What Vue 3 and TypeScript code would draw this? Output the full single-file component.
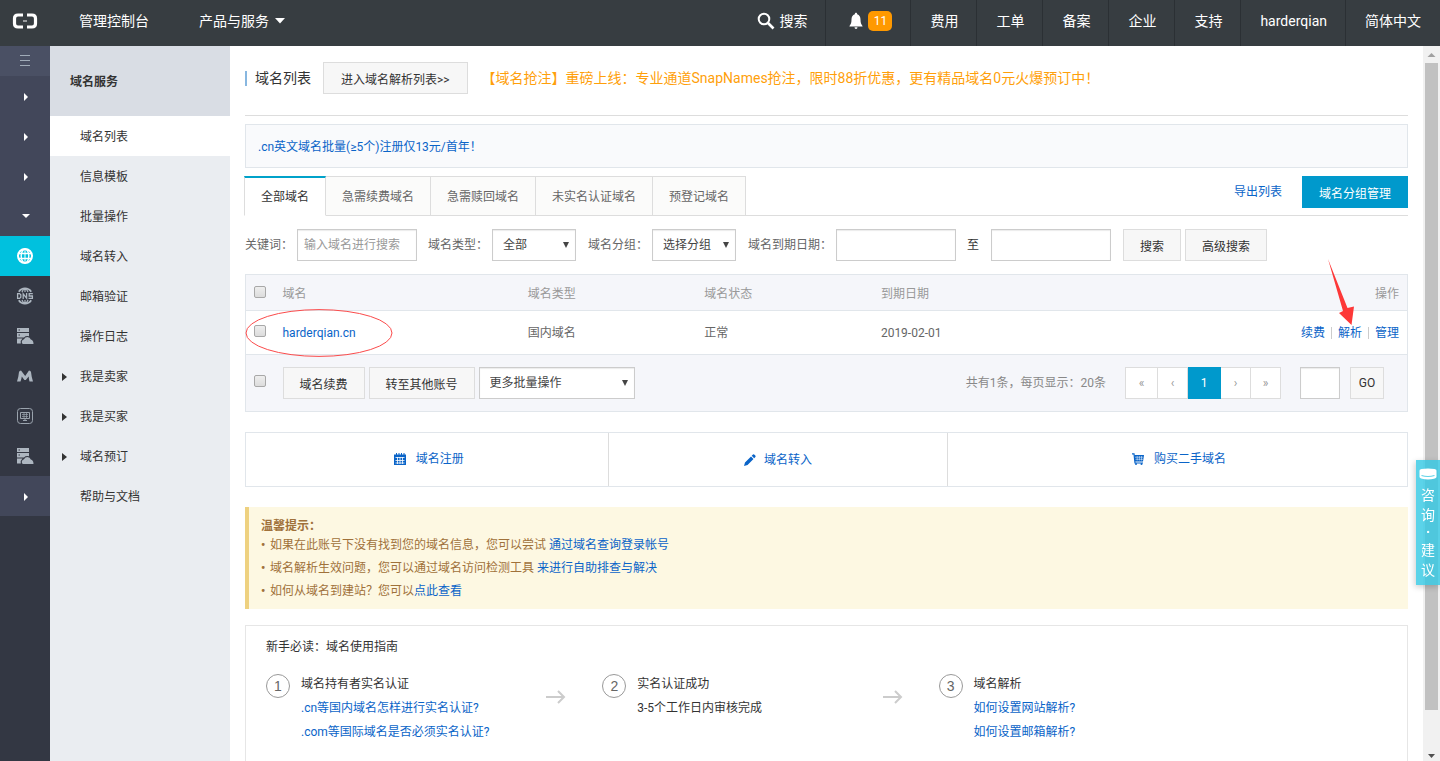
<script setup lang="ts">
import { ref } from 'vue'

interface NavItem {
  label: string
  expandable?: boolean
}

const topLinks: string[] = ['费用', '工单', '备案', '企业', '支持', 'harderqian', '简体中文']

const sideItems: NavItem[] = [
  { label: '域名列表' },
  { label: '信息模板' },
  { label: '批量操作' },
  { label: '域名转入' },
  { label: '邮箱验证' },
  { label: '操作日志' },
  { label: '我是卖家', expandable: true },
  { label: '我是买家', expandable: true },
  { label: '域名预订', expandable: true },
  { label: '帮助与文档' },
]
const activeSide = ref('域名列表')

const tabs: string[] = ['全部域名', '急需续费域名', '急需赎回域名', '未实名认证域名', '预登记域名']
const activeTab = ref('全部域名')

const keyword = ref('')
const dateFrom = ref('')
const dateTo = ref('')
const pageInput = ref('')

const steps = [
  { title: '域名持有者实名认证', links: ['.cn等国内域名怎样进行实名认证?', '.com等国际域名是否必须实名认证?'], text: '' },
  { title: '实名认证成功', links: [] as string[], text: '3-5个工作日内审核完成' },
  { title: '域名解析', links: ['如何设置网站解析?', '如何设置邮箱解析?'], text: '' },
]
</script>

<template>
  <div class="app">
    <header class="topbar">
      <a href="#" class="logo" aria-label="首页">
        <svg width="26" height="16" viewBox="0 0 26 16" fill="none">
          <path d="M11 2H6Q2.500 2 2.500 5.500V10.500Q2.500 14 6 14H11" stroke="#fff" stroke-width="3.200" />
          <path d="M15 2H20Q23.500 2 23.500 5.500V10.500Q23.500 14 20 14H15" stroke="#fff" stroke-width="3.200" />
          <path d="M11 8H15" stroke="#9b9ea0" stroke-width="2" />
        </svg>
      </a>
      <a href="#" class="top-main">管理控制台</a>
      <a href="#" class="top-main top-products">产品与服务
        <svg width="10" height="6" viewBox="0 0 10 6"><path d="M0 0H10L5 5.500Z" fill="#fff" /></svg>
      </a>
      <nav class="top-right">
        <a href="#" class="top-link top-search">
          <svg width="18" height="18" viewBox="0 0 18 18" fill="none" stroke="#fff">
            <circle cx="7" cy="7" r="5.300" stroke-width="2" />
            <path d="M11 11L16.500 16.500" stroke-width="2.600" />
          </svg>搜索
        </a>
        <a href="#" class="top-link top-bell">
          <svg width="16" height="18" viewBox="0 0 16 18" fill="#fff">
            <path d="M8 0.800C8.900 0.800 9.200 1.500 9.200 2.200C11.500 2.900 12.500 4.800 12.500 7.500C12.500 10.500 13 12 14.500 14V14.600H1.500V14C3 12 3.500 10.500 3.500 7.500C3.500 4.800 4.500 2.900 6.800 2.200C6.800 1.500 7.100 0.800 8 0.800Z" />
            <path d="M6.500 15.300H9.500Q9.500 17 8 17Q6.500 17 6.500 15.300Z" />
          </svg>
          <span class="badge">11</span>
        </a>
        <a v-for="link in topLinks" :key="link" href="#" class="top-link">{{ link }}</a>
      </nav>
    </header>

    <div class="body">
      <nav class="rail" aria-label="产品">
        <button class="rail-toggle" aria-label="收起">
          <svg width="10" height="12" viewBox="0 0 10 12" stroke="#a0abb8"><path d="M0 0.500H10M0 5.500H10M0 10.500H10" /></svg>
        </button>
        <button v-for="n in 3" :key="n" class="rail-item group" aria-label="展开">
          <svg width="6" height="8" viewBox="0 0 6 8"><path d="M1 0L5 4L1 8Z" fill="#fff" /></svg>
        </button>
        <button class="rail-item group open" aria-label="收起分组">
          <svg width="8" height="4" viewBox="0 0 8 4"><path d="M0 0H8L4 4Z" fill="#fff" /></svg>
        </button>
        <a href="#" class="rail-item current" aria-label="域名">
          <svg width="18" height="18" viewBox="0 0 18 18" fill="none" stroke="#fff" stroke-width="1.400">
            <circle cx="9" cy="9" r="7" stroke-width="2" />
            <ellipse cx="9" cy="9" rx="3.800" ry="7" />
            <path d="M2 6.500H16M2 11.500H16" />
            <path d="M9 2V16" stroke-width="1" />
          </svg>
        </a>
        <a href="#" class="rail-item" aria-label="云解析">
          <svg width="18" height="18" viewBox="0 0 18 18" fill="none" stroke="#adb6c0">
            <path d="M2.800 4.800A7.400 7.400 0 0 1 15.200 4.800M2.800 13.200A7.400 7.400 0 0 0 15.200 13.200" stroke-width="1.800" />
            <path d="M6 5Q6.800 2.500 9 1.500Q11.200 2.500 12 5M6 13Q6.800 15.500 9 16.500Q11.200 15.500 12 13M9 1V5M9 13V17" stroke-width="1.200" />
            <path d="M1.600 6.600V11.400H3.600L4.800 10.200V7.800L3.600 6.600ZM7.200 12V6.800L10.600 11.200V6M16.800 6.600H13.200V9H16.400V11.400H12.500" stroke-width="1.300" />
          </svg>
        </a>
        <a href="#" class="rail-item" aria-label="云服务器">
          <svg width="18" height="18" viewBox="0 0 18 18" fill="#adb6c0">
            <path d="M1 1H13V5H1ZM1 6H13V9.200Q9.500 8.600 8 10.500H1ZM1 11.500H6.500Q4.500 13 4.800 16.500H1Z" />
            <path d="M7 17Q5.500 16.500 5.800 14.500Q6.300 12.500 8 12.300Q9 10 11.500 10Q14 10 14.800 12.500Q17.500 13 17.500 17Z" />
            <path d="M2.500 3H4M2.500 8H4" stroke="#333743" />
          </svg>
        </a>
        <a href="#" class="rail-item" aria-label="邮件推送">
          <svg width="18" height="18" viewBox="0 0 18 18" fill="#adb6c0">
            <path d="M1 14.500Q2.500 10 3 5Q3.400 3.500 5 3.500L9.200 9L13 3.500Q14.700 3.500 15 5Q15.500 10 17 14.500H13.500Q12.800 12 12.700 9.500L9.800 13H8.400L5.800 9.500Q5.500 12 4.500 14.500Z" />
          </svg>
        </a>
        <a href="#" class="rail-item" aria-label="主机">
          <svg width="18" height="18" viewBox="0 0 18 18" fill="none" stroke="#9aa3ad">
            <rect x="1.500" y="1.500" width="15" height="15" rx="3" />
            <path d="M4.500 5.500H13.500V11.500H4.500ZM7 13.500H11M9 11.500V13.500" />
            <path d="M6 7.500H12M6 9.500H12M8 6V11M10.500 6V11" stroke-width="0.700" />
          </svg>
        </a>
        <a href="#" class="rail-item" aria-label="云虚拟主机">
          <svg width="18" height="18" viewBox="0 0 18 18" fill="#adb6c0">
            <path d="M1 1H13V5H1ZM1 6H13V9.200Q9.500 8.600 8 10.500H1ZM1 11.500H6.500Q4.500 13 4.800 16.500H1Z" />
            <path d="M7 17Q5.500 16.500 5.800 14.500Q6.300 12.500 8 12.300Q9 10 11.500 10Q14 10 14.800 12.500Q17.500 13 17.500 17Z" />
            <path d="M2.500 3H4M2.500 8H4" stroke="#333743" />
          </svg>
        </a>
        <button class="rail-item group" aria-label="更多">
          <svg width="6" height="8" viewBox="0 0 6 8"><path d="M1 0L5 4L1 8Z" fill="#fff" /></svg>
        </button>
      </nav>

      <aside class="side">
        <h2 class="side-title">域名服务</h2>
        <a
          v-for="item in sideItems"
          :key="item.label"
          href="#"
          class="side-item"
          :class="{ active: item.label === activeSide }"
          @click.prevent="activeSide = item.label"
        >
          <span class="side-caret">
            <svg v-if="item.expandable" width="6" height="8" viewBox="0 0 6 8"><path d="M0 0L5 4L0 8Z" fill="#333" /></svg>
          </span>
          {{ item.label }}
        </a>
      </aside>

      <main class="main">
        <div class="title-row">
          <h1>域名列表</h1>
          <button class="btn">进入域名解析列表&gt;&gt;</button>
          <a href="#" class="promo">【域名抢注】重磅上线：专业通道SnapNames抢注，限时88折优惠，更有精品域名0元火爆预订中！</a>
        </div>

        <div class="notice"><a href="#">.cn英文域名批量(≥5个)注册仅13元/首年！</a></div>

        <div class="tab-row">
          <div class="tabs" role="tablist">
            <button
              v-for="tab in tabs"
              :key="tab"
              role="tab"
              class="tab"
              :class="{ active: tab === activeTab }"
              :aria-selected="tab === activeTab"
              @click="activeTab = tab"
            >{{ tab }}</button>
          </div>
          <a href="#" class="export">导出列表</a>
          <button class="btn primary">域名分组管理</button>
        </div>

        <form class="filters" @submit.prevent>
          <label for="keyword">关键词：</label>
          <input id="keyword" v-model="keyword" class="field" type="text" placeholder="输入域名进行搜索" />
          <label for="kind">域名类型：</label>
          <span class="select">
            <select id="kind"><option>全部</option></select>
            <svg width="8" height="8" viewBox="0 0 8 8"><path d="M1 1H7L4 7Z" fill="#444" /></svg>
          </span>
          <label for="group">域名分组：</label>
          <span class="select">
            <select id="group"><option>选择分组</option></select>
            <svg width="8" height="8" viewBox="0 0 8 8"><path d="M1 1H7L4 7Z" fill="#444" /></svg>
          </span>
          <label for="from">域名到期日期：</label>
          <input id="from" v-model="dateFrom" class="field" type="text" />
          <label for="to" class="to">至</label>
          <input id="to" v-model="dateTo" class="field" type="text" />
          <button class="btn search-btn">搜索</button>
          <button class="btn" type="button">高级搜索</button>
        </form>

        <table class="table">
          <colgroup>
            <col class="c-check" /><col class="c-name" /><col class="c-mid" /><col class="c-mid" /><col />
            <col class="c-ops" />
          </colgroup>
          <thead>
            <tr>
              <th><input type="checkbox" aria-label="全选" /></th>
              <th>域名</th>
              <th>域名类型</th>
              <th>域名状态</th>
              <th>到期日期</th>
              <th class="ops">操作</th>
            </tr>
          </thead>
          <tbody>
            <tr>
              <td class="marked">
                <input type="checkbox" aria-label="选择 harderqian.cn" />
                <svg class="ring" width="148" height="48" viewBox="0 0 148 48" fill="none">
                  <ellipse cx="74" cy="24" rx="73" ry="23.400" stroke="#fb4b4b" />
                </svg>
              </td>
              <td><a href="#">harderqian.cn</a></td>
              <td>国内域名</td>
              <td>正常</td>
              <td>2019-02-01</td>
              <td class="ops">
                <a href="#">续费</a><i class="bar"></i><a href="#" class="resolve">解析<svg
                  class="pointer" width="30" height="68" viewBox="0 0 30 68"
                ><path d="M1 0L20.500 49L27 47.500L24.500 66L12 54L16 52Z" fill="#fd3838" /></svg></a><i class="bar"></i><a href="#">管理</a>
              </td>
            </tr>
          </tbody>
          <tfoot>
            <tr>
              <td><input type="checkbox" aria-label="全选本页" /></td>
              <td colspan="5">
                <div class="foot">
                  <button class="btn">域名续费</button>
                  <button class="btn">转至其他账号</button>
                  <span class="select wide">
                    <select aria-label="更多批量操作"><option>更多批量操作</option></select>
                    <svg width="8" height="8" viewBox="0 0 8 8"><path d="M1 1H7L4 7Z" fill="#444" /></svg>
                  </span>
                  <span class="total">共有1条，每页显示：20条</span>
                  <div class="pager">
                    <button aria-label="首页">«</button>
                    <button aria-label="上一页">‹</button>
                    <button class="on">1</button>
                    <button aria-label="下一页">›</button>
                    <button aria-label="末页">»</button>
                  </div>
                  <input v-model="pageInput" class="field page-input" type="text" aria-label="页码" />
                  <button class="btn go">GO</button>
                </div>
              </td>
            </tr>
          </tfoot>
        </table>

        <div class="cards">
          <a href="#" class="card gap-wide">
            <svg width="12" height="12" viewBox="0 0 12 12">
              <path d="M0 1.500H12V12H0Z" fill="#0a64c8" />
              <path d="M2.500 0V2M5 0V2M7.500 0V2M10 0V2" stroke="#0a64c8" />
              <path d="M1.500 4.500H10.500M1.500 7.500H10.500M1.500 10H10.500M3.500 4V11M6 4V11M8.500 4V11" stroke="#fff" stroke-width="0.800" />
            </svg>域名注册
          </a>
          <a href="#" class="card">
            <svg width="12" height="12" viewBox="0 0 12 12" fill="#0a64c8">
              <path d="M0 12L1 8.500L7 2.500L9.500 5L3.500 11ZM7.700 1.800L9 0.500Q9.700 0 10.500 0.800L11.300 1.600Q12 2.400 11.400 3L10.200 4.300Z" />
            </svg>域名转入
          </a>
          <a href="#" class="card gap-wide">
            <svg width="12" height="12" viewBox="0 0 12 12">
              <path d="M0 0.800H2L3 10H11" fill="none" stroke="#0a64c8" stroke-width="1.200" />
              <path d="M2.300 2H12L11 8.500H3Z" fill="#0a64c8" />
              <path d="M3 4.200H11M3.500 6.300H11M5.200 3V7.500M7.400 3V7.500M9.500 3V7.500" stroke="#fff" stroke-width="0.500" />
              <circle cx="4" cy="11" r="1" fill="#0a64c8" /><circle cx="9.500" cy="11" r="1" fill="#0a64c8" />
            </svg>购买二手域名
          </a>
        </div>

        <section class="tips">
          <h3>温馨提示：</h3>
          <p><span class="bullet">•</span>如果在此账号下没有找到您的域名信息，您可以尝试 <a href="#">通过域名查询登录帐号</a></p>
          <p><span class="bullet">•</span>域名解析生效问题，您可以通过域名访问检测工具 <a href="#">来进行自助排查与解决</a></p>
          <p><span class="bullet">•</span>如何从域名到建站？您可以<a href="#">点此查看</a></p>
        </section>

        <section class="guide">
          <h3>新手必读：域名使用指南</h3>
          <div class="steps">
            <div v-for="(step, i) in steps" :key="step.title" class="step">
              <span class="num">{{ i + 1 }}</span>
              <div class="step-text">
                <p>{{ step.title }}</p>
                <p v-if="step.text">{{ step.text }}</p>
                <p v-for="l in step.links" :key="l"><a href="#">{{ l }}</a></p>
              </div>
              <svg v-if="i < 2" class="step-arrow" width="20" height="14" viewBox="0 0 20 14" fill="none" stroke="#ccc" stroke-width="2">
                <path d="M0 7H18M12 1L18 7L12 13" />
              </svg>
            </div>
          </div>
        </section>
      </main>

      <div class="scrollbar" aria-hidden="true">
        <svg width="17" height="17" viewBox="0 0 17 17"><path d="M4.500 11H12.500L8.500 7Z" fill="#a0a0a0" /></svg>
        <div class="track"><div class="thumb"></div></div>
        <svg width="17" height="17" viewBox="0 0 17 17"><path d="M5 10H12L8.500 14Z" fill="#505050" /></svg>
      </div>
    </div>

    <button class="feedback" aria-label="咨询·建议">
      <svg width="18" height="12" viewBox="0 0 18 12">
        <path d="M0.500 3Q0 1.500 2.500 1Q9 0 15.500 1Q18 1.500 17.500 3V9Q17.500 10.300 15 10.800Q9 12 3 10.800Q0.500 10.300 0.500 9Z" fill="#fff" />
        <path d="M2.500 7.500Q9 9.500 15.500 7.500" fill="none" stroke="#5fd3e8" stroke-width="1.200" />
      </svg>
      <span>咨</span><span>询</span><span class="dot">·</span><span>建</span><span>议</span>
    </button>
  </div>
</template>

<style>
body {
  margin: 0;
  overflow: hidden;
}
</style>

<style scoped>
* {
  box-sizing: border-box;
}
.app {
  height: 100vh;
  display: flex;
  flex-direction: column;
  font-family: Roboto, "Noto Sans CJK SC", sans-serif;
  font-size: 12px;
  line-height: 18px;
  color: #333;
  background: #fff;
}
a {
  color: #0a64c8;
  text-decoration: none;
}
h1, h2, h3, p {
  margin: 0;
}
button, input, select {
  font-family: inherit;
  font-size: 12px;
  color: #333;
  margin: 0;
}
button {
  cursor: pointer;
}

/* top bar */
.topbar {
  flex: none;
  height: 46px;
  display: flex;
  align-items: center;
  background: #373d41;
  font-size: 14px;
  padding-bottom: 4px;
}
.topbar a {
  color: #fff;
}
.logo {
  width: 50px;
  display: flex;
  justify-content: center;
}
.top-main {
  margin-left: 29px;
  display: flex;
  align-items: center;
  gap: 6px;
}
.top-products {
  margin-left: 50px;
}
.top-right {
  margin-left: auto;
  padding-right: 1px;
  display: flex;
}
.top-link {
  height: 46px;
  padding: 0 18px 4px;
  margin-bottom: -4px;
  display: flex;
  align-items: center;
  border-left: 1px solid #2b3034;
}
.top-link:nth-child(n + 3) {
  padding-left: 19px;
}
.top-search {
  border-left: 0;
  gap: 4px;
}
.top-bell {
  padding-left: 22px;
  gap: 4px;
}
.badge {
  background: #f90;
  border-radius: 5px;
  height: 20px;
  line-height: 20px;
  width: 24px;
  text-align: center;
  font-size: 12px;
}

.body {
  flex: 1;
  min-height: 0;
  display: flex;
}

/* icon rail */
.rail {
  flex: none;
  width: 50px;
  background: #333743;
  display: flex;
  flex-direction: column;
}
.rail button {
  border: 0;
}
.rail-toggle {
  height: 30px;
  flex: none;
  padding: 0;
  background: #4a5064;
  display: flex;
  align-items: center;
  justify-content: center;
}
.rail-item {
  height: 40px;
  flex: none;
  display: flex;
  align-items: center;
  justify-content: center;
}
.group {
  background: #42475a;
  padding: 2px 0 0 2px;
}
.group.open {
  padding-top: 0;
}
.current {
  background: #00c1de;
}

/* section menu */
.side {
  flex: none;
  width: 180px;
  background: #eaedf1;
}
.side-title {
  height: 70px;
  padding-left: 20px;
  line-height: 72px;
  background: #d9dde4;
  font-size: 12px;
  font-weight: 700;
}
.side-item {
  height: 40px;
  padding: 2px 0 0 12px;
  display: flex;
  align-items: center;
  color: #333;
}
.side-item.active {
  background: #fff;
}
.side-caret {
  width: 18px;
  display: flex;
}

/* content */
.main {
  flex: 1;
  min-width: 0;
  overflow: hidden;
  padding: 0 15px;
}
.btn {
  height: 32px;
  padding: 0 16px;
  border: 1px solid #ddd;
  background: #f7f7f7;
  white-space: nowrap;
}
.btn.primary {
  border-color: #09c;
  background: #09c;
  color: #fff;
}
.title-row {
  display: flex;
  align-items: center;
  height: 70px;
  padding-bottom: 5px;
  border-bottom: 1px solid #ddd;
}
.title-row h1 {
  font-size: 14px;
  font-weight: 400;
  line-height: 15px;
  padding-left: 8px;
  margin-right: 12px;
  border-left: 2px solid #88b7e0;
}
.title-row .btn {
  padding: 0 17px;
}
.promo {
  margin-left: 14px;
  font-size: 14px;
  color: #ff9f0a;
}
.notice {
  margin-top: 8px;
  height: 44px;
  line-height: 44px;
  padding-left: 12px;
  border: 1px solid #e1e6eb;
  background: #f9fafc;
}
.tab-row {
  margin-top: 8px;
  display: flex;
  height: 40px;
  border-bottom: 1px solid #ddd;
}
.tabs {
  display: flex;
  margin: 0 auto 0 -1px;
}
.tab {
  height: 40px;
  padding: 0 16px 1px;
  border: 1px solid #ddd;
  border-left: 0;
  background: #fbfbfa;
  color: #666;
}
.tab.active {
  padding-bottom: 2px;
  border-top: 2px solid #00a2ca;
  border-left: 1px solid #ddd;
  border-bottom: 1px solid #fff;
  background: #fff;
  color: #333;
}
.export {
  line-height: 32px;
  margin-right: 20px;
}
.filters {
  display: flex;
  align-items: center;
  margin-top: 13px;
  color: #666;
}
.field, select {
  height: 32px;
  border: 1px solid #ccc;
  border-radius: 0;
  background: #fff;
  box-shadow: inset 0 1px 1px rgba(0, 0, 0, 0.08);
}
.field {
  width: 120px;
  padding: 0 6px;
}
.field::placeholder {
  color: #999;
}
.filters label {
  margin: 0 4px 0 12px;
  white-space: nowrap;
}
.filters label:first-child {
  margin-left: 0;
}
.filters .field + label {
  margin-left: 11px;
}
.filters .to {
  margin: 0 12px;
  color: #333;
}
.search-btn {
  margin: 0 4px 0 12px;
}
.select {
  position: relative;
  display: inline-flex;
  width: 84px;
}
.select svg {
  position: absolute;
  right: 6px;
  top: 12px;
  pointer-events: none;
}
select {
  appearance: none;
  width: 100%;
  padding: 0 10px;
  color: #444;
}
.select.wide {
  width: 156px;
}

/* domain table */
.table {
  margin-top: 13px;
  width: 100%;
  table-layout: fixed;
  border-collapse: collapse;
  border: 1px solid #e1e6eb;
}
.c-check { width: 29px; }
.c-name { width: 21.1%; }
.c-mid { width: 15.2%; }
.c-ops { width: 25%; }
.table tr {
  border-bottom: 1px solid #e1e6eb;
}
.table th, .table td {
  padding: 0 8px;
  text-align: left;
  color: #666;
}
.table th {
  height: 36px;
  padding-top: 2px;
  background: #f5f6fa;
  color: #999;
  font-weight: 400;
}
.table td {
  height: 44px;
}
.table tfoot td {
  height: 57px;
  background: #f5f6fa;
}
.table .ops {
  text-align: right;
}
.marked {
  position: relative;
}
.ring {
  position: absolute;
  left: -1px;
  top: -2px;
  z-index: 1;
  pointer-events: none;
}
.resolve {
  position: relative;
}
.pointer {
  position: absolute;
  left: -11px;
  bottom: 13px;
  pointer-events: none;
}
.bar {
  display: inline-block;
  width: 1px;
  height: 12px;
  margin: 0 6px;
  background: #ccc;
  vertical-align: -2px;
}
input[type="checkbox"] {
  appearance: none;
  display: block;
  width: 12px;
  height: 12px;
  margin-bottom: 4px;
  border: 1px solid #a8a8a8;
  border-radius: 2px;
  background: linear-gradient(#eee, #dcdcdc);
}
.foot {
  display: flex;
  align-items: center;
  gap: 4px;
  padding-right: 15px;
}
.total {
  margin-left: auto;
  margin-right: 15px;
  color: #888;
}
.pager {
  display: flex;
  margin-right: 15px;
}
.pager button {
  width: 30px;
  height: 32px;
  padding: 0;
  border: 1px solid #ddd;
  border-left-width: 0;
  background: #fff;
  color: #999;
}
.pager button:first-child {
  width: 33px;
  border-left-width: 1px;
}
.pager .on {
  width: 33px;
  border-color: #09c;
  background: #09c;
  color: #fff;
}
.page-input {
  width: 40px;
  margin-right: 6px;
}
.go {
  width: 34px;
  padding: 0;
}

/* shortcuts */
.cards {
  margin-top: 20px;
  display: grid;
  grid-template-columns: 363fr 339fr 461fr;
  border: 1px solid #e1e6eb;
}
.card {
  height: 53px;
  display: flex;
  align-items: center;
  justify-content: center;
  gap: 8px;
}
.card + .card {
  border-left: 1px solid #ddd;
}
.card.gap-wide {
  gap: 10px;
  padding: 0 0 1px 3px;
}

.tips {
  margin-top: 20px;
  padding: 12px 12px 6px;
  border-left: 4px solid #eed180;
  background: #fdf8e2;
  color: #a0713a;
}
.tips h3 {
  font-size: 12px;
  font-weight: 700;
  line-height: 15px;
}
.tips p {
  line-height: 23px;
}
.bullet {
  display: inline-block;
  width: 9px;
  font-weight: 700;
}

.guide {
  margin-top: 16px;
  min-height: 160px;
  padding: 9px 20px 20px;
  border: 1px solid #e6e6e6;
}
.guide h3 {
  font-size: 12px;
  font-weight: 400;
  line-height: 24px;
}
.steps {
  display: flex;
  margin-top: 13px;
}
.step {
  flex: none;
  width: 30%;
  display: flex;
  align-items: flex-start;
}
.num {
  width: 24px;
  height: 24px;
  margin: 2px 11px 0 0;
  border: 1px solid #999;
  border-radius: 50%;
  line-height: 22px;
  text-align: center;
  font-family: "Liberation Sans", Arial, sans-serif;
  font-size: 14px;
  color: #666;
}
.step-text {
  line-height: 24px;
}
.step-arrow {
  margin: 18px 36px 0 auto;
}

/* scroll strip */
.scrollbar {
  flex: none;
  width: 17px;
  display: flex;
  flex-direction: column;
  background: #f1f1f1;
}
.scrollbar svg {
  display: block;
  flex: none;
}
.track {
  flex: 1;
  padding: 0 2px;
}
.thumb {
  height: 95%;
  background: #c1c1c1;
}

.feedback {
  position: fixed;
  right: 0;
  top: 460px;
  width: 24px;
  height: 125px;
  padding: 8px 0 5px;
  border: 0;
  display: flex;
  flex-direction: column;
  align-items: center;
  background: rgba(50, 200, 228, 0.8);
  box-shadow: -1px 2px 6px rgba(0, 0, 0, 0.2);
  color: #fff;
  font-size: 14px;
  line-height: 20px;
}
.feedback svg {
  flex: none;
  margin-bottom: 5px;
}
.feedback .dot {
  line-height: 15px;
  font-weight: 700;
}
</style>
